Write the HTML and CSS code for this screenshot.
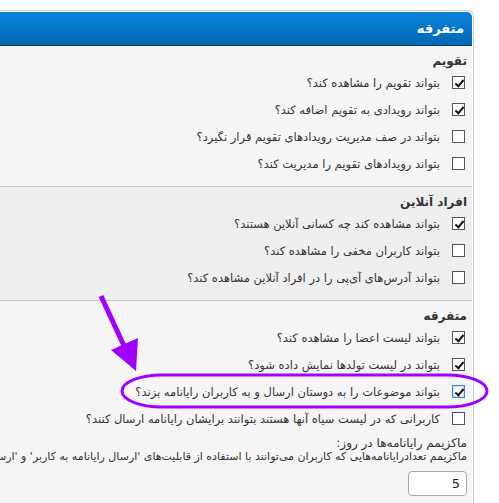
FILE: index.html
```html
<!DOCTYPE html>
<html lang="fa" dir="rtl">

<head>
    <meta charset="UTF-8">
    <title>تنظیمات گروه - متفرقه</title>
    <link rel="stylesheet" href="styles.css">
</head>

<body>
    <div class="page">
        <div class="panel">
            <div class="panel-head">متفرقه</div>

            <div class="group row1">
                <h3 class="group-title">تقویم</h3>
                <label class="row"><span class="box checked"></span><span>بتواند تقویم را مشاهده کند؟</span></label>
                <label class="row"><span class="box checked"></span><span>بتواند رویدادی به تقویم اضافه کند؟</span></label>
                <label class="row"><span class="box"></span><span>بتواند در صف مدیریت رویدادهای تقویم قرار نگیرد؟</span></label>
                <label class="row"><span class="box"></span><span>بتواند رویدادهای تقویم را مدیریت کند؟</span></label>
            </div>

            <div class="group row2">
                <h3 class="group-title">افراد آنلاین</h3>
                <label class="row"><span class="box checked"></span><span>بتواند مشاهده کند چه کسانی آنلاین هستند؟</span></label>
                <label class="row"><span class="box"></span><span>بتواند کاربران مخفی را مشاهده کند؟</span></label>
                <label class="row"><span class="box"></span><span>بتواند آدرس‌های آی‌پی را در افراد آنلاین مشاهده کند؟</span></label>
            </div>

            <div class="group row1">
                <h3 class="group-title">متفرقه</h3>
                <label class="row"><span class="box checked"></span><span>بتواند لیست اعضا را مشاهده کند؟</span></label>
                <label class="row"><span class="box checked"></span><span>بتواند در لیست تولدها نمایش داده شود؟</span></label>
                <label class="row"><span class="box checked focus"></span><span>بتواند موضوعات را به دوستان ارسال و به کاربران رایانامه بزند؟</span></label>
                <label class="row"><span class="box"></span><span>کاربرانی که در لیست سیاه آنها هستند بتوانند برایشان رایانامه ارسال کنند؟</span></label>

                <div class="setting">
                    <p class="setting-label">ماکزیمم رایانامه‌ها در روز:</p>
                    <p class="setting-desc">ماکزیمم تعدادرایانامه‌هایی که کاربران می‌توانند با استفاده از قابلیت‌های 'ارسال رایانامه به کاربر' و 'ارسال رایانامه به دوستان' ارسال کنند.</p>
                    <div class="text-box">5</div>
                </div>
            </div>
        </div>

        <!-- annotation drawn on top of the screenshot -->
        <svg class="mark" width="499" height="503" viewBox="0 0 499 503">
            <line x1="101" y1="296" x2="125" y2="348" stroke="#a000ff" stroke-width="5" />
            <polygon points="111,350 138,338 136,371" fill="#a000ff" />
            <rect x="122" y="375" width="365" height="32" rx="40" ry="16" fill="none" stroke="#a000ff" stroke-width="3" />
        </svg>
    </div>
</body>

</html>
```

FILE: styles.css
```css
html {
    overflow: hidden;
    background-color: #ffffff;
}

* {
    box-sizing: border-box;
    margin: 0;
    padding: 0;
}

body {
    font-family: 'DejaVu Sans', Tahoma, sans-serif;
    font-size: 11.5px;
    color: #333333;
    direction: rtl;
}

.page {
    position: relative;
    width: 499px;
    height: 503px;
    overflow: hidden;
    padding-top: 10px;
}

/*PANEL*/
.panel {
    width: 640px;
    margin-right: 25px;
    background-color: #ffffff;
    border: 1px solid #cccccc;
    border-bottom: none;
    border-radius: 6px 6px 0 0;
    padding: 1px 1px 0 1px;
}

.panel-head {
    height: 34px;
    line-height: 33px;
    padding-right: 8px;
    font-size: 13px;
    font-weight: bold;
    color: #ffffff;
    background: linear-gradient(#0a83dc, #0068b4);
    border-bottom: 1px solid #1b3550;
    border-radius: 5px 5px 0 0;
}

/*GROUPS*/
.group {
    padding: 7px 5px 9px 0;
}

.group+.group {
    border-top: 1px solid #cccccc;
}

.row1 {
    background-color: #f5f5f5;
}

.row2 {
    background-color: #efefef;
}

.group-title {
    font-size: 12px;
    font-weight: bold;
    line-height: 16px;
    color: #333333;
}

.row {
    display: flex;
    align-items: center;
    gap: 12px;
    height: 27px;
    padding-right: 2px;
    white-space: nowrap;
}

.box {
    position: relative;
    flex: none;
    width: 13px;
    height: 13px;
    border: 1px solid #555555;
    background-color: #ffffff;
}

.box.checked::after {
    content: "";
    position: absolute;
    left: 3.5px;
    top: 0.5px;
    width: 3px;
    height: 7px;
    border-right: 2.5px solid #111111;
    border-bottom: 2.5px solid #111111;
    transform: rotate(40deg);
}

.box.focus {
    border-color: #4a7fd4;
    box-shadow: inset 0 0 0 1px #c8dcf8;
}

/*SETTING*/
.setting {
    margin-top: 4px;
}

.setting-label {
    font-size: 12px;
    line-height: 14px;
    white-space: nowrap;
}

.setting-desc {
    font-size: 11px;
    line-height: 14px;
    white-space: nowrap;
}

.text-box {
    width: 59px;
    height: 25px;
    margin-top: 7px;
    padding-right: 6px;
    line-height: 23px;
    font-size: 13px;
    color: #222222;
    background-color: #ffffff;
    border: 1px solid #aaaaaa;
    border-radius: 4px;
}

.mark {
    position: absolute;
    top: 0;
    left: 0;
    pointer-events: none;
}
```
